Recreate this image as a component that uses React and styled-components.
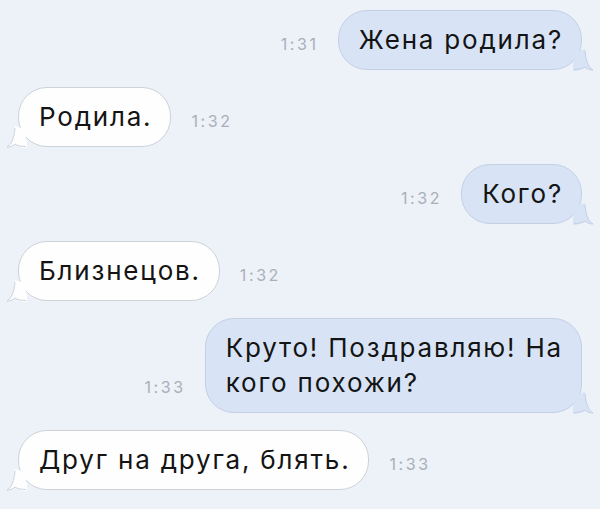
import React from 'react'
import styled, { createGlobalStyle } from 'styled-components'

const GlobalStyle = createGlobalStyle`
	html, body {
		margin: 0;
		padding: 0;
		background: #edf1f8;
	}
	body {
		font-family: Inter, 'Liberation Sans', sans-serif;
		-webkit-font-smoothing: antialiased;
	}
`

const colors = {
	bg: '#edf1f8',
	outFill: '#d8e4f6',
	outBorder: '#c3d0e4',
	inFill: '#fefefe',
	inBorder: '#cdd2da',
	text: '#141414',
	time: '#a9afb9'
}

const Chat = styled.div`
	width: 600px;
	height: 509px;
	box-sizing: border-box;
	padding: 10px 18px 0;
	display: flex;
	flex-direction: column;
	gap: 17px;
	overflow: hidden;
`

const Row = styled.div`
	display: flex;
	align-items: flex-end;
	justify-content: flex-end;
	flex-direction: ${p => (p.out ? 'row' : 'row-reverse')};
	gap: ${p => (p.out ? '19px' : '20px')};
`

const Time = styled.span`
	font-size: 16px;
	line-height: 16px;
	color: ${colors.time};
	margin-bottom: 18px;
	letter-spacing: 2.6px;
`

const Bubble = styled.div`
	position: relative;
	padding: 11px 18px 12px 20px;
	font-size: 26px;
	line-height: 35px;
	letter-spacing: 1.8px;
	color: ${colors.text};
	border-radius: 29px;
	white-space: nowrap;
	background: ${p => (p.out ? colors.outFill : colors.inFill)};
	border: 1px solid ${p => (p.out ? colors.outBorder : colors.inBorder)};
`

const TailSvg = styled.svg`
	position: absolute;
	bottom: -2px;
	${p => (p.out ? 'right: -12px;' : 'left: -12px;')}
	width: 20px;
	height: 22px;
	${p => (p.out ? '' : 'transform: scaleX(-1);')}
`

const Tail = ({ out }) => (
	<TailSvg out={out ? 1 : 0} viewBox="0 0 20 22">
		<path
			d="M0 4 C2 10 1 14 0 14 L0 22 C6 22 10 20 12 18 C14 20 17 21 20 21 C15 18 13 12 12 0 Z"
			fill={out ? colors.outFill : colors.inFill}
			stroke="none"
		/>
		<path
			d="M12 18 C14 20 17 21 20 21 C15 18 13 12 12 2"
			fill="none"
			stroke={out ? colors.outBorder : colors.inBorder}
			strokeWidth="1"
		/>
		<path
			d="M1 20.5 C6 20.5 10 19.5 12 18"
			fill="none"
			stroke={out ? colors.outBorder : colors.inBorder}
			strokeWidth="1"
		/>
	</TailSvg>
)

const messages = [
	{ out: true, time: '1:31', text: ['Жена родила?'] },
	{ out: false, time: '1:32', text: ['Родила.'] },
	{ out: true, time: '1:32', text: ['Кого?'] },
	{ out: false, time: '1:32', text: ['Близнецов.'] },
	{ out: true, time: '1:33', text: ['Круто! Поздравляю! На', 'кого похожи?'] },
	{ out: false, time: '1:33', text: ['Друг на друга, блять.'] }
]

export default function App() {
	return (
		<>
			<GlobalStyle />
			<Chat>
				{messages.map((m, i) => (
					<Row key={i} out={m.out ? 1 : 0}>
						<Time>{m.time}</Time>
						<Bubble out={m.out ? 1 : 0}>
							{m.text.map((line, j) => (
								<div key={j}>{line}</div>
							))}
							<Tail out={m.out} />
						</Bubble>
					</Row>
				))}
			</Chat>
		</>
	)
}
